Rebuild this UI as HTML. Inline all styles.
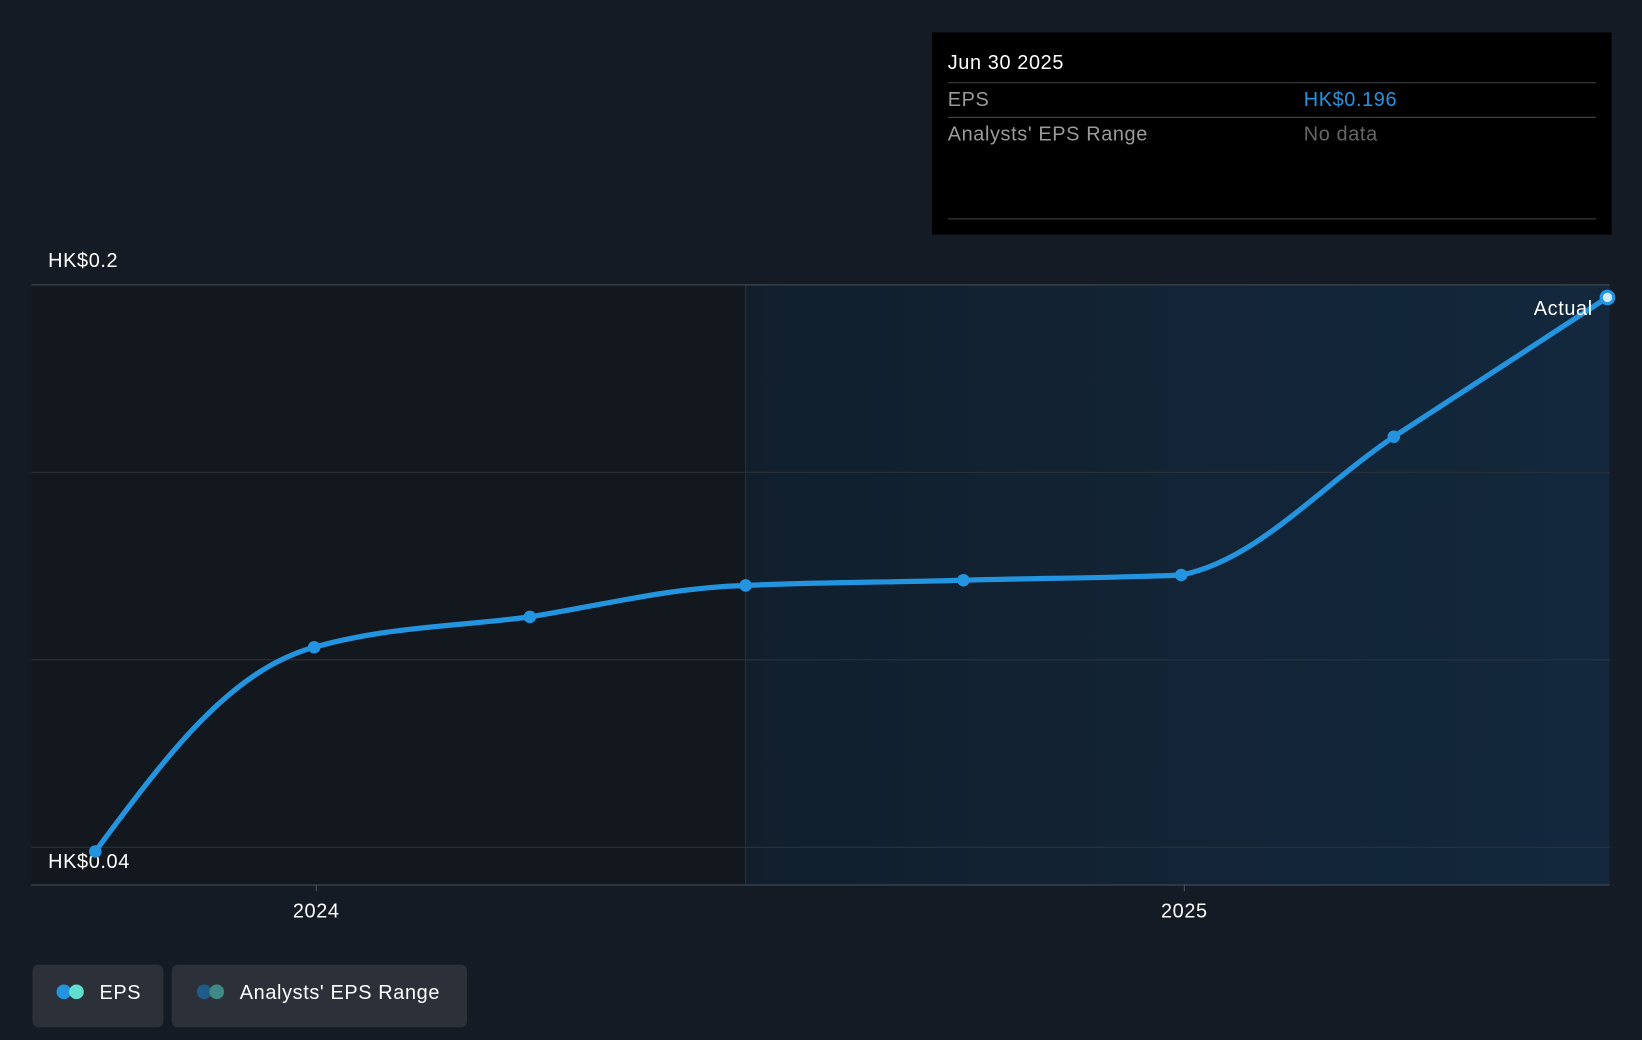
<!DOCTYPE html>
<html><head><meta charset="utf-8"><style>
html,body{margin:0;padding:0;background:#151b24;}
svg{display:block;font-family:"Liberation Sans",sans-serif;}
text{letter-spacing:0.6px;font-weight:500;}
</style></head><body>
<svg width="1642" height="1040" viewBox="0 0 1568 993" preserveAspectRatio="none">
<defs>
<linearGradient id="g" x1="0" y1="0" x2="1" y2="0">
<stop offset="0" stop-color="#111f2d"/><stop offset="1" stop-color="#13283d"/>
</linearGradient>
</defs>
<rect width="1568" height="993" fill="#151b24"/>
<rect x="30" y="272" width="682" height="573" fill="#13171e"/>
<rect x="712" y="272" width="825" height="573" fill="url(#g)"/>
<line x1="712" y1="272" x2="712" y2="845" stroke="#24313c" stroke-width="1"/>
<g stroke="#2b323a" stroke-width="1">
<line x1="30" y1="272" x2="1537" y2="272" stroke="#4a5058"/>
<line x1="30" y1="451" x2="1537" y2="451"/>
<line x1="30" y1="630" x2="1537" y2="630"/>
<line x1="30" y1="809" x2="1537" y2="809"/>
<line x1="30" y1="845" x2="1537" y2="845" stroke="#4a5058"/>
<line x1="302" y1="845" x2="302" y2="851" stroke="#4a5058"/>
<line x1="1131" y1="845" x2="1131" y2="851" stroke="#4a5058"/>
</g>
<text x="46" y="255" fill="#fff" font-size="19">HK$0.2</text>
<text x="46" y="829" fill="#fff" font-size="19">HK$0.04</text>
<text x="302" y="876" fill="#fff" font-size="19" text-anchor="middle">2024</text>
<text x="1131" y="876" fill="#fff" font-size="19" text-anchor="middle">2025</text>
<path d="M91,813 C160,720 220,640 300,618 C370,598 440,598 506,589 C580,577 640,561 712,559 C780,556 850,556 920,554 C990,552 1060,552 1128,549 C1200,535 1260,465 1331,417 L1535,284" fill="none" stroke="#2394e0" stroke-width="5" stroke-linecap="round"/>
<g fill="#2394e0">
<circle cx="91" cy="813" r="6"/><circle cx="300" cy="618" r="6"/><circle cx="506" cy="589" r="6"/>
<circle cx="712" cy="559" r="6"/><circle cx="920" cy="554" r="6"/><circle cx="1128" cy="549" r="6"/>
<circle cx="1331" cy="417" r="6"/>
</g>
<circle cx="1535" cy="284" r="6" fill="#cfeaff" stroke="#2394e0" stroke-width="3"/>
<text x="1521" y="301" fill="#fff" font-size="19" text-anchor="end" font-weight="bold">Actual</text>
<rect x="890" y="31" width="649" height="193" fill="#000"/>
<text x="905" y="66" fill="#fff" font-size="19" font-weight="bold">Jun 30 2025</text>
<line x1="905" y1="79" x2="1524" y2="79" stroke="#444"/>
<text x="905" y="101" fill="#9a9a9a" font-size="19">EPS</text>
<text x="1245" y="101" fill="#2394e0" font-size="19" font-weight="bold">HK$0.196</text>
<line x1="905" y1="112" x2="1524" y2="112" stroke="#444"/>
<text x="905" y="134" fill="#9a9a9a" font-size="19">Analysts' EPS Range</text>
<text x="1245" y="134" fill="#666" font-size="19">No data</text>
<line x1="905" y1="209" x2="1524" y2="209" stroke="#444"/>
<rect x="31" y="921" width="125" height="60" rx="6" fill="#2c3038"/>
<circle cx="61" cy="947" r="7" fill="#2394e0"/><circle cx="73" cy="947" r="7" fill="#5fe0cf"/>
<text x="95" y="954" fill="#fff" font-size="19">EPS</text>
<rect x="164" y="921" width="282" height="60" rx="6" fill="#2c3038"/>
<circle cx="195" cy="947" r="7" fill="#1f5c8a"/><circle cx="207" cy="947" r="7" fill="#3f8a85"/>
<text x="229" y="954" fill="#fff" font-size="19">Analysts' EPS Range</text>
</svg>
</body></html>
